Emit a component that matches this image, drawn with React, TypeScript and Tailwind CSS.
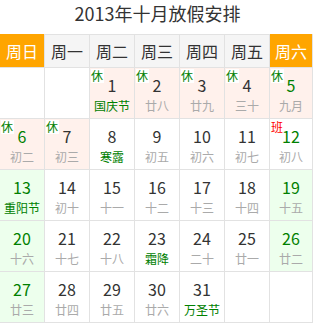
import React from 'react';

type Day = {
  n?: number;
  sub?: string;
  fest?: boolean;   // green festival text
  rest?: boolean;   // 休
  work?: boolean;   // 班
  bg?: 'holiday' | 'weekend';
  green?: boolean;  // green number
};

const weekDays = ['周日', '周一', '周二', '周三', '周四', '周五', '周六'];

const rows: Day[][] = [
  [
    {},
    {},
    { n: 1, sub: '国庆节', fest: true, rest: true, bg: 'holiday' },
    { n: 2, sub: '廿八', rest: true, bg: 'holiday' },
    { n: 3, sub: '廿九', rest: true, bg: 'holiday' },
    { n: 4, sub: '三十', rest: true, bg: 'holiday' },
    { n: 5, sub: '九月', rest: true, bg: 'holiday', green: true },
  ],
  [
    { n: 6, sub: '初二', rest: true, bg: 'holiday', green: true },
    { n: 7, sub: '初三', rest: true, bg: 'holiday' },
    { n: 8, sub: '寒露', fest: true },
    { n: 9, sub: '初五' },
    { n: 10, sub: '初六' },
    { n: 11, sub: '初七' },
    { n: 12, sub: '初八', work: true, green: true },
  ],
  [
    { n: 13, sub: '重阳节', fest: true, bg: 'weekend', green: true },
    { n: 14, sub: '初十' },
    { n: 15, sub: '十一' },
    { n: 16, sub: '十二' },
    { n: 17, sub: '十三' },
    { n: 18, sub: '十四' },
    { n: 19, sub: '十五', bg: 'weekend', green: true },
  ],
  [
    { n: 20, sub: '十六', bg: 'weekend', green: true },
    { n: 21, sub: '十七' },
    { n: 22, sub: '十八' },
    { n: 23, sub: '霜降', fest: true },
    { n: 24, sub: '二十' },
    { n: 25, sub: '廿一' },
    { n: 26, sub: '廿二', bg: 'weekend', green: true },
  ],
  [
    { n: 27, sub: '廿三', bg: 'weekend', green: true },
    { n: 28, sub: '廿四' },
    { n: 29, sub: '廿五' },
    { n: 30, sub: '廿六' },
    { n: 31, sub: '万圣节', fest: true },
    {},
    {},
  ],
];

const Cell: React.FC<{ d: Day }> = ({ d }) => {
  const bg =
    d.bg === 'holiday' ? 'bg-[#fff1ec]' : d.bg === 'weekend' ? 'bg-[#edffed]' : 'bg-white';
  return (
    <div className={`relative h-[50px] flex flex-col items-center pt-[6px] ${bg}`}>
      {d.rest && (
        <span className="absolute left-px top-px w-[13px] h-[14px] bg-white text-[12px] leading-[14px] text-[#008000]">
          休
        </span>
      )}
      {d.work && (
        <span className="absolute left-px top-px w-[13px] h-[14px] text-[12px] leading-[14px] text-[#ff0000]">
          班
        </span>
      )}
      {d.n !== undefined && (
        <>
          <span className={`text-[16px] leading-[22px] ${d.green ? 'text-[#008000]' : 'text-[#333]'}`}>
            {d.n}
          </span>
          <span
            className={`mt-[2px] text-[12px] leading-[16px] whitespace-nowrap ${
              d.fest ? 'text-[#008000]' : 'text-[#aaa]'
            }`}
          >
            {d.sub}
          </span>
        </>
      )}
    </div>
  );
};

export default function App() {
  return (
    <div
      className="w-[315px] h-[323px] bg-white text-[#333]"
      style={{ fontFamily: '"Noto Sans CJK SC", "Noto Sans", sans-serif' }}
    >
      <div className="h-[34px] pb-2 text-center text-[18px] leading-[26px] text-[#333]">
        2013年十月放假安排
      </div>
      <div className="w-[313px] grid grid-cols-[44px_44px_44px_44px_44px_44px_42px] gap-px bg-[#e2e2e2] pr-px pb-px">
        {weekDays.map((w, i) => {
          const weekend = i === 0 || i === 6;
          return (
            <div
              key={w}
              className={`h-[33px] border-t flex items-center justify-center text-[16px] ${
                weekend
                  ? 'bg-[#ffa500] border-[#ffa500] text-white'
                  : 'bg-[#f5f5f5] border-[#e2e2e2] text-[#333]'
              }`}
            >
              {w}
            </div>
          );
        })}
        {rows.flat().map((d, i) => (
          <Cell key={i} d={d} />
        ))}
      </div>
    </div>
  );
}
